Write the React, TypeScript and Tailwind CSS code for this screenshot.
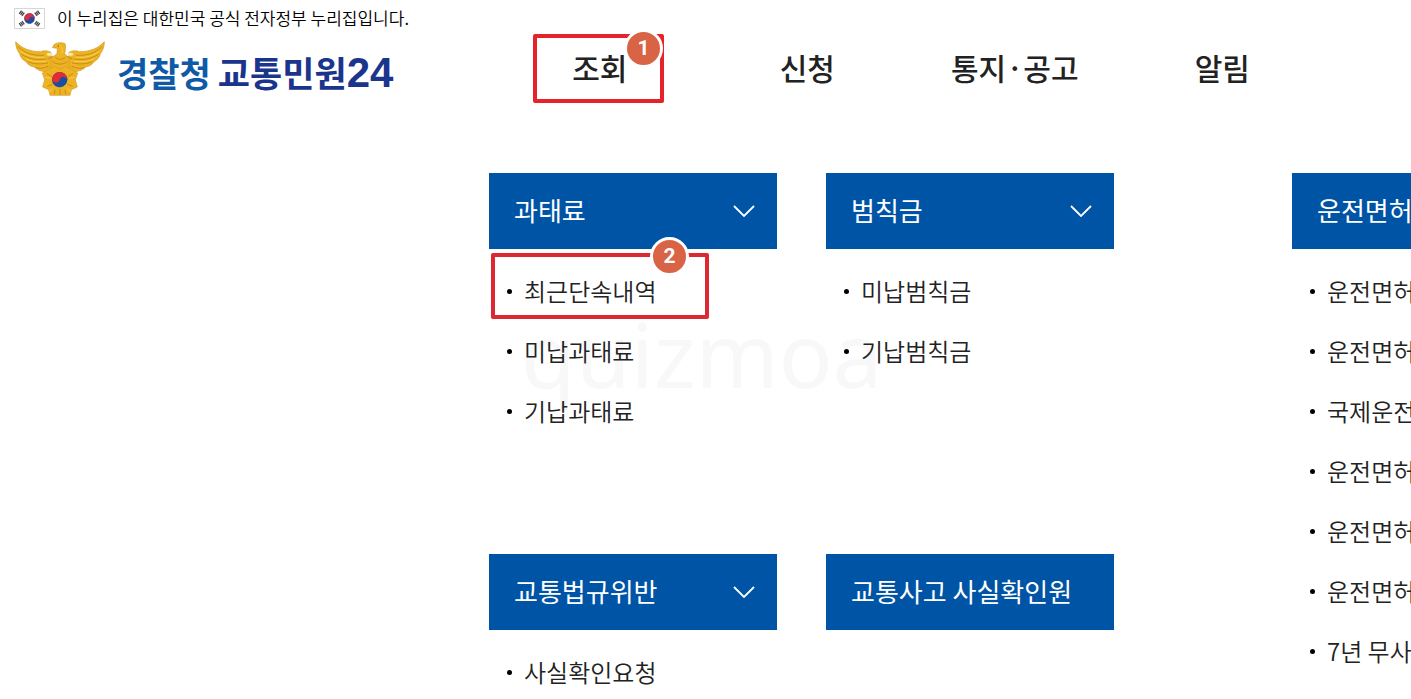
import React from "react";

type Section = { title: string; expandable: boolean; items: string[] };

const navItems = ["조회", "신청", "통지·공고", "알림"];

const sections: Section[] = [
  { title: "과태료", expandable: true, items: ["최근단속내역", "미납과태료", "기납과태료"] },
  { title: "범칙금", expandable: true, items: ["미납범칙금", "기납범칙금"] },
  { title: "교통법규위반", expandable: true, items: ["사실확인요청"] },
  { title: "교통사고 사실확인원", expandable: false, items: [] },
];

const licenseSection: Section = {
  title: "운전면허",
  expandable: false,
  items: ["운전면허", "운전면허", "국제운전", "운전면허", "운전면허", "운전면허", "7년 무사"],
};

function Flag() {
  return (
    <svg viewBox="0 0 31 21" className="h-[21px] w-[31px] shrink-0" aria-hidden="true">
      <rect x="0.5" y="0.5" width="30" height="20" fill="#fff" stroke="#d6d6d6" />
      <g transform="rotate(20 15.5 10.5)">
        <circle cx="15.5" cy="10.5" r="5.3" fill="#1f4ba0" />
        <path d="M10.2 10.5a5.3 5.3 0 0 1 10.6 0a2.65 2.65 0 0 0-5.3 0a2.65 2.65 0 0 1-5.3 0z" fill="#d5323f" />
      </g>
      <g stroke="#444" strokeWidth="1.3">
        <path d="M5.2 5.8l2.3-3.2M6.6 6.8l2.3-3.2M8 7.8l2.3-3.2" />
        <path d="M25.8 5.8l-2.3-3.2M24.4 6.8l-2.3-3.2M23 7.8l-2.3-3.2" />
        <path d="M5.2 15.2l2.3 3.2M6.6 14.2l2.3 3.2M8 13.2l2.3 3.2" />
        <path d="M25.8 15.2l-2.3 3.2M24.4 14.2l-2.3 3.2M23 13.2l-2.3 3.2" />
      </g>
    </svg>
  );
}

function Emblem() {
  return (
    <svg viewBox="0 0 270 165" className="h-[55px] w-[90px] shrink-0" aria-hidden="true">
      <g fill="#edb323" stroke="#d39a25" strokeWidth="2" strokeLinejoin="round">
        <path d="M2 2C20 22 46 32 76 32C86 28 98 28 108 34L112 90L92 92C78 92 66 86 58 78C46 76 38 70 33 62C22 56 16 48 14 38C6 28 2 16 2 2Z" />
        <path d="M268 2C250 22 224 32 194 32C184 28 172 28 162 34L158 90L178 92C192 92 204 86 212 78C224 76 232 70 237 62C248 56 254 48 256 38C264 28 268 16 268 2Z" />
        <path d="M112 20L118 10C124 5 142 3 150 8C153 16 151 28 149 38L162 52L162 92L108 92L108 52L126 38L127 22Z" />
        <path d="M102 84L118 76L135 84L152 76L168 84L188 96L181 116L187 138L169 146L165 163L105 163L101 146L83 138L89 116L82 96Z" />
      </g>
      <g fill="none" stroke="#bf8417" strokeWidth="2.5" strokeLinecap="round">
        <path d="M10 18C30 38 56 44 86 43M20 40C42 55 64 58 92 54M40 63C60 70 78 70 98 66M62 80C74 84 88 82 100 76" />
        <path d="M260 18C240 38 214 44 184 43M250 40C228 55 206 58 178 54M230 63C210 70 192 70 172 66M208 80C196 84 182 82 170 76" />
        <path d="M98 54L114 46M172 54L156 46M114 62C122 72 148 72 156 62M122 50C130 57 142 57 150 50" />
        <path d="M96 98L110 106M174 98L160 106M98 136L112 130M172 136L158 130M120 148L118 158M135 146V160M150 148L152 158" />
      </g>
      <g fill="none" stroke="#f8d04c" strokeWidth="3" strokeLinecap="round">
        <path d="M14 28C34 46 60 51 88 49M32 52C50 63 70 64 94 60M256 28C236 46 210 51 182 49M238 52C220 63 200 64 176 60" />
        <path d="M134 14C142 18 144 26 141 36M92 108L106 112M178 108L164 112M104 152L110 144M166 152L160 144" />
      </g>
      <path d="M97 36l12-1 6 4-9 6-11-2zM173 36l-12-1-6 4 9 6 11-2z" fill="#f9e6ae" />
      <circle cx="130" cy="15" r="2" fill="#8a5a10" />
      <g transform="rotate(15 134 116)">
        <circle cx="134" cy="116" r="23" fill="#17509f" />
        <path d="M111 116a23 23 0 0 1 46 0a11.5 11.5 0 0 0-23 0a11.5 11.5 0 0 1-23 0z" fill="#e32b36" />
      </g>
    </svg>
  );
}

function Chevron() {
  return (
    <svg viewBox="0 0 22 12" className="h-3 w-[22px] shrink-0" fill="none" aria-hidden="true">
      <path d="M1 1l10 10L21 1" stroke="#fff" strokeWidth="1.8" />
    </svg>
  );
}

function Badge({ n, className }: { n: number; className: string }) {
  return (
    <span
      className={`absolute flex size-[39px] items-center justify-center rounded-full border-3 border-white bg-[#d86445] font-[Roboto,sans-serif] text-[21px] leading-none font-bold text-white ${className}`}
    >
      {n}
    </span>
  );
}

function MenuSection({ section, marked }: { section: Section; marked?: boolean }) {
  const heading =
    "flex h-[76px] w-full items-center justify-between bg-[#0054a6] pr-[22px] pl-[25px] text-left text-[26px] whitespace-nowrap text-white";
  return (
    <section>
      <h2>
        {section.expandable ? (
          <button type="button" className={heading}>
            <span className="pb-1">{section.title}</span>
            <Chevron />
          </button>
        ) : (
          <a href="#" className={heading}>
            <span className="pb-1">{section.title}</span>
          </a>
        )}
      </h2>
      <ul className="pt-3">
        {section.items.map((item, i) => (
          <li key={i} className="relative flex h-[60px] items-center gap-3 pl-[18px]">
            <span className="size-[5px] shrink-0 rounded-full bg-black" />
            <a href="#" className="pb-px text-[24px] font-[350] whitespace-nowrap text-[#222]">
              {item}
            </a>
            {marked && i === 0 && (
              <span className="pointer-events-none absolute -top-2 left-0.5 h-[66px] w-[218px] rounded-xs border-4 border-[#dc2830]">
                <Badge n={2} className="-top-5 right-4" />
              </span>
            )}
          </li>
        ))}
      </ul>
    </section>
  );
}

export default function App() {
  return (
    <div className="min-h-screen overflow-hidden bg-white font-['Noto_Sans_CJK_KR',sans-serif] text-[#222]">
      <header className="flex h-[173px]">
        <div className="w-[489px] shrink-0 pt-2 pl-[14px]">
          <div className="flex h-[21px] items-center gap-3">
            <Flag />
            <p className="pb-0.5 text-[17px] leading-5 font-[350] whitespace-nowrap text-black">
              이 누리집은 대한민국 공식 전자정부 누리집입니다.
            </p>
          </div>
          <a href="#" className="mt-[11px] flex items-center gap-3 pl-px">
            <Emblem />
            <span className="flex items-baseline gap-[7px] pt-2 text-[35px] leading-[48px] font-bold whitespace-nowrap">
              <span className="text-[34px] text-[#0f5aa6]">경찰청</span>
              <span className="text-[#1b348c]">
                교통민원<span className="font-['Liberation_Sans',sans-serif] text-[42px]">24</span>
              </span>
            </span>
          </a>
        </div>
        <nav className="mt-[34px] mr-[85px] ml-[7px] flex-1">
          <ul className="grid grid-cols-4">
            {navItems.map((item, i) => (
              <li key={item} className="relative flex h-[69px] items-center justify-center">
                <a href="#" className="pb-0.5 text-[30px] font-medium whitespace-nowrap">
                  {item}
                </a>
                {i === 0 && (
                  <span className="pointer-events-none absolute top-0 left-[37px] h-[69px] w-[131px] rounded-xs border-4 border-[#e6222b]">
                    <Badge n={1} className="-top-[9px] -right-[3px]" />
                  </span>
                )}
              </li>
            ))}
          </ul>
        </nav>
      </header>
      <main className="relative flex pl-[489px]">
        <span
          className="pointer-events-none absolute top-[121px] left-[521px] font-['Noto_Sans',sans-serif] text-[89px] leading-[120px] text-[#f8f8f8] select-none"
          aria-hidden="true"
        >
          quizmoa
        </span>
        <div className="relative mr-[178px] grid flex-1 grid-cols-2 content-start gap-x-[49px] gap-y-[113px]">
          {sections.map((s, i) => (
            <MenuSection key={s.title} section={s} marked={i === 0} />
          ))}
        </div>
        <div className="relative -mr-[169px] w-[288px] shrink-0">
          <MenuSection section={licenseSection} />
        </div>
      </main>
    </div>
  );
}
